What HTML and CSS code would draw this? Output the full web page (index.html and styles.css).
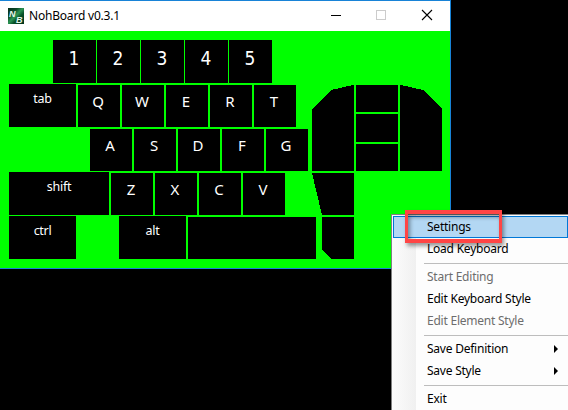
FILE: index.html
```html
<!DOCTYPE html>
<html lang="en">
<head>
<meta charset="utf-8">
<title>NohBoard v0.3.1</title>
<link rel="stylesheet" href="styles.css">
</head>
<body>
<main class="window">
  <header class="titlebar">
    <svg class="logo" width="16" height="16" viewBox="0 0 16 16">
      <defs><linearGradient id="g" x1="0" y1="0" x2="1" y2="1"><stop offset="0" stop-color="#062d1c"/><stop offset=".3" stop-color="#0b4a28"/><stop offset=".48" stop-color="#2d9654"/><stop offset=".65" stop-color="#075027"/><stop offset="1" stop-color="#03301a"/></linearGradient></defs>
      <rect width="16" height="16" fill="url(#g)"/>
      <text x="1" y="8.5" class="logo-letter">N</text>
      <text x="8" y="15" class="logo-letter">B</text>
    </svg>
    <h1 class="title">NohBoard v0.3.1</h1>
    <svg class="controls" width="102" height="12" viewBox="0 0 102 12" fill="none" shape-rendering="crispEdges">
      <path d="M0 6.5h10" stroke="#000"/>
      <rect x="45.5" y="1.5" width="9" height="9" stroke="#ccc"/>
      <path d="M91 1l10 10M101 1L91 11" stroke="#000" stroke-width="1.1" shape-rendering="auto"/>
    </svg>
  </header>
  <section class="board">
    <div class="keys">
      <div class="row row-digits"><span class="key">1</span><span class="key">2</span><span class="key">3</span><span class="key">4</span><span class="key">5</span></div>
      <div class="row"><span class="key tall mod">tab</span><span class="key">Q</span><span class="key">W</span><span class="key">E</span><span class="key">R</span><span class="key">T</span></div>
      <div class="row row-home"><span class="key">A</span><span class="key">S</span><span class="key">D</span><span class="key">F</span><span class="key">G</span></div>
      <div class="row"><span class="key tall mod shift">shift</span><span class="key">Z</span><span class="key">X</span><span class="key">C</span><span class="key">V</span></div>
      <div class="row"><span class="key tall mod">ctrl</span><span class="key tall mod alt">alt</span><span class="key space"></span></div>
    </div>
    <svg class="mouse" width="130" height="174" viewBox="0 0 130 174" shape-rendering="crispEdges">
      <path d="M0 24L19 5L41 0H42V86H0Z"/>
      <path d="M44 0H86V27H44ZM44 29H86V57H44ZM44 59H86V86H44Z"/>
      <path d="M88 0H89L111 5L130 24V86H88Z"/>
      <path d="M0 88H42V130H10Z"/>
      <path d="M10 132H42V174H19L10 165Z"/>
    </svg>
  </section>
</main>
<nav class="menu">
  <div class="item selected"><span>Settings</span></div>
  <div class="item"><span>Load Keyboard</span></div>
  <hr class="separator">
  <div class="item disabled"><span>Start Editing</span></div>
  <div class="item"><span>Edit Keyboard Style</span></div>
  <div class="item disabled"><span>Edit Element Style</span></div>
  <hr class="separator">
  <div class="item"><span>Save Definition</span><i class="arrow"></i></div>
  <div class="item"><span>Save Style</span><i class="arrow"></i></div>
  <hr class="separator">
  <div class="item"><span>Exit</span></div>
</nav>
<div class="highlight"></div>
</body>
</html>
```

FILE: styles.css
```css
* { box-sizing: border-box; }
body { margin: 0; width: 568px; height: 410px; overflow: hidden; background: #000; position: relative; }
.window { width: 451px; height: 269px; background: #0f0; border: solid #1883d7; border-width: 1px 1px 1px 0; }
.titlebar { height: 30px; background: #fff; display: flex; align-items: center; padding: 0 17px 0 8px; }
.logo-letter { font: italic bold 9px "Liberation Sans", sans-serif; fill: #e4f5ea; }
.title { margin: 0 auto 0 5px; font: 12px/18px "Noto Sans", sans-serif; letter-spacing: -.2px; color: #000; }
.controls { display: block; margin-top: -2px; }
.board { display: flex; padding: 9px 0 0 9px; }
.keys { width: 303px; flex: none; }
.row { display: flex; gap: 2px; height: 44px; align-items: flex-end; }
.row-digits { gap: 1px; height: 43px; padding-left: 44px; }
.row-home { padding-left: 81px; }
.key { width: 42px; height: 42px; flex: none; background: #000; color: #fff; text-align: center; padding-right: 2px; font: 15px/33px "Noto Sans", sans-serif; }
.row-digits .key { width: 43px; height: 43px; padding-right: 1px; font: 19px/36px "DejaVu Sans Condensed", sans-serif; }
.row .tall { height: 43px; width: 67px; padding: 0; }
.row .mod { font-size: 12.5px; line-height: 30px; letter-spacing: -.3px; }
.row .shift { width: 100px; }
.alt { margin-left: 41px; }
.row .space { width: 128px; }
.mouse { display: block; flex: none; margin-top: 45px; }
.menu { position: absolute; left: 391px; top: 214px; width: 178px; height: 200px; padding: 1px 1px 0 1px; border: 1px solid #808080; background: linear-gradient(90deg, #fcfcfc, #f0f0f0 24px, #fdfdfd 24px); font: 12px/20px "Noto Sans", sans-serif; letter-spacing: -.23px; color: #000; }
.item { height: 22px; border: 1px solid transparent; padding: 0 8px 0 33px; display: flex; align-items: center; justify-content: space-between; white-space: nowrap; }
.selected { width: 175px; background: #b3d7f3; border-color: #0078d7; }
.disabled { color: #6d6d6d; }
.separator { margin: 3px -1px 2px 31px; border: 0; height: 1px; background: #bdbdbd; }
.arrow { border: solid transparent; border-width: 4px 0 4px 4px; border-left-color: #000; }
.highlight { position: absolute; left: 405px; top: 210px; width: 97px; height: 33px; border: 4px solid #ff4545; border-width: 4px 3px; box-shadow: 2px 3px 4px #0006, inset 2px 3px 4px #0006; }
```
